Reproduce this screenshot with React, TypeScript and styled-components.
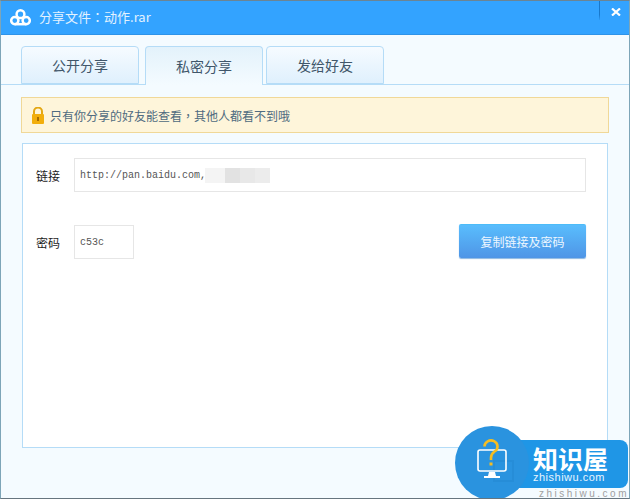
import React from "react";
import styled, { createGlobalStyle } from "styled-components";

const GlobalStyle = createGlobalStyle`
  html, body {
    margin: 0;
    padding: 0;
    background: #f4fbff;
  }
  * {
    box-sizing: border-box;
  }
`;

const cjk = `"Noto Sans CJK SC", "Liberation Sans", sans-serif`;

const Window = styled.div`
  position: relative;
  width: 630px;
  height: 499px;
  overflow: hidden;
  display: flex;
  flex-direction: column;
  background: #f4fbff;
  border-top: 1px solid #6b8494;
  border-left: 1px solid #7da5b8;
  border-right: 1px solid #7da5b8;
  border-bottom: 1px solid #66757f;
  font-family: ${cjk};
`;

const TitleBar = styled.div`
  height: 34px;
  flex: none;
  display: flex;
  align-items: center;
  padding-left: 9px;
  gap: 8px;
  background: #33a3ff;
  border-bottom: 1px solid #2e93e8;
  color: #e3f2ff;
  font-size: 13px;
`;

const TitleText = styled.span`
  line-height: 34px;
  margin-top: -1px;
`;

// centred full-width punctuation, as in the original's font
const Punct = styled.span`
  font-family: "Noto Sans CJK TC", sans-serif;
`;

const CloseArea = styled.div`
  margin-left: auto;
  width: 30px;
  height: 19px;
  align-self: flex-start;
  display: flex;
  align-items: center;
  justify-content: center;
  padding: 3px 0 0 3px;
  border-left: 1px solid #1878cc;
  border-image: linear-gradient(#1878cc 70%, transparent) 1;
`;

const TabBar = styled.div`
  flex: none;
  height: 50px;
  padding: 11px 0 0 20px;
  display: flex;
  align-items: flex-end;
  border-bottom: 1px solid #b5dcf7;
`;

const Tab = styled.div<{ $active?: boolean; $gap?: number }>`
  width: 118px;
  height: ${(p) => (p.$active ? 39 : 38)}px;
  margin-left: ${(p) => p.$gap ?? 0}px;
  margin-bottom: ${(p) => (p.$active ? -1 : 0)}px;
  display: flex;
  align-items: center;
  justify-content: center;
  border: 1px solid #b5dcf7;
  border-bottom: ${(p) => (p.$active ? "none" : "1px solid #b5dcf7")};
  border-radius: 4px 4px 0 0;
  background: ${(p) =>
    p.$active
      ? "linear-gradient(#e3f2fb, #f4fbff)"
      : "linear-gradient(#f6fbff, #dff0fd)"};
  color: #40566a;
  font-size: 14px;
`;

const Notice = styled.div`
  flex: none;
  width: 588px;
  height: 36px;
  margin: 12px 0 0 20px;
  display: flex;
  align-items: center;
  padding-left: 9px;
  gap: 5px;
  background: #fef5da;
  border: 1px solid #f0d898;
  color: #4f6b80;
  font-size: 12px;
`;

const Panel = styled.div`
  flex: none;
  width: 586px;
  height: 305px;
  margin: 10px 0 0 21px;
  padding: 14px 21px 0 13px;
  display: flex;
  flex-direction: column;
  background: #fff;
  border: 1px solid #b5dcf7;
`;

const Row = styled.div<{ $top?: number }>`
  display: flex;
  align-items: center;
  height: 34px;
  margin-top: ${(p) => p.$top ?? 0}px;
`;

const Label = styled.span`
  width: 38px;
  flex: none;
  color: #1c1c1c;
  font-size: 12px;
`;

const Field = styled.div<{ $width?: number }>`
  height: 34px;
  width: ${(p) => (p.$width ? `${p.$width}px` : "auto")};
  flex: ${(p) => (p.$width ? "none" : "1")};
  display: flex;
  align-items: center;
  padding-left: 5px;
  border: 1px solid #e6e6e6;
  color: #555;
  font-family: "Liberation Mono", monospace;
  font-size: 10px;
`;

const BlurRow = styled.span`
  display: flex;
  margin-left: -1px;
  margin-top: 1px;
`;

const Blurred = styled.span<{ $w: number; $shade: string }>`
  width: ${(p) => p.$w}px;
  height: 15px;
  flex: none;
  background: ${(p) => p.$shade};
`;

const CopyButton = styled.button`
  margin: -1px 0 0 auto;
  align-self: flex-start;
  width: 127px;
  height: 34px;
  padding: 0;
  border: none;
  border-top: 1px solid #4dbcf8;
  border-radius: 2px;
  background: linear-gradient(#59bdfd, #4f95e6);
  box-shadow: 0 1px 1px #8bb6e2;
  color: #eef7ff;
  font-family: ${cjk};
  font-size: 12px;
`;

const Badge = styled.div`
  position: absolute;
  left: 454px;
  top: 425px;
  width: 176px;
  height: 74px;
`;

const BadgeBar = styled.div`
  position: absolute;
  left: 37px;
  top: 14px;
  width: 136px;
  height: 48px;
  padding: 5px 0 0 41px;
  border-radius: 0 8px 8px 0;
  background: #1f96e6;
  color: #fff;
`;

const BadgeCircle = styled.div`
  position: absolute;
  left: 0;
  top: 0;
  width: 74px;
  height: 74px;
  padding-bottom: 9px;
  border-radius: 50%;
  background: #2a93df;
  display: flex;
  align-items: center;
  justify-content: center;
`;

const BadgeTitle = styled.div`
  font-size: 25px;
  font-weight: 700;
  line-height: 27px;
  white-space: nowrap;
`;

const BadgeUrl = styled.div`
  font-family: "Liberation Sans", sans-serif;
  font-size: 11px;
  line-height: 11px;
  letter-spacing: 0.5px;
  color: #e6f4ff;
`;

const Watermark = styled.div`
  position: absolute;
  right: 0;
  bottom: -1px;
  font-family: "Liberation Sans", sans-serif;
  font-size: 10px;
  line-height: 11px;
  letter-spacing: 2.5px;
  color: #a0a0a0;
`;

const CloudLogo = () => (
  <svg width="21" height="17" viewBox="0 0 21 17" fill="none" stroke="#fff" strokeWidth="2.5">
    <circle cx="10.5" cy="5.2" r="3.9" />
    <circle cx="4.8" cy="11.6" r="3.6" />
    <circle cx="16.2" cy="11.6" r="3.6" />
    <path d="M4.8 15.2 H16.2" />
  </svg>
);

const CloseIcon = () => (
  <svg width="10" height="8" viewBox="0 0 10 8" stroke="#fff" strokeWidth="2.2">
    <path d="M1 0.5 L9 7.5 M9 0.5 L1 7.5" />
  </svg>
);

const LockIcon = () => (
  <svg width="14" height="17" viewBox="0 0 14 17">
    <path d="M3 8 V4.5 a4 4 0 0 1 8 0 V8" fill="none" stroke="#e3a713" strokeWidth="2" />
    <rect x="1" y="7" width="12" height="10" rx="1" fill="#f2ae0c" />
    <rect x="6" y="10" width="2" height="4" fill="#a56c00" />
  </svg>
);

const MonitorIcon = () => (
  <svg width="30" height="39" viewBox="0 0 30 39" fill="none" style={{ overflow: "visible" }}>
    <path d="M17 22 H36 V42 H17 Z" stroke="#1c7cc4" strokeOpacity="0.25" strokeWidth="2" />
    <rect x="1" y="11" width="28" height="21" rx="2" stroke="#fff" strokeWidth="1.6" />
    <path d="M12 33 H18 L19 37 H23 V39 H7 V37 H11 Z" fill="#fff" />
    <path d="M7.5 7.5 a6.5 6 0 1 1 10 5 c-2.5 1.8 -3.5 3 -3.5 6.5 V21" stroke="#f5bd22" strokeWidth="2.6" />
    <rect x="12.5" y="23.5" width="3" height="3" fill="#f5bd22" />
  </svg>
);

const blurBlocks = [
  { w: 20, shade: "#f4f4f4" },
  { w: 15, shade: "#e2e2e2" },
  { w: 15, shade: "#e8e8e8" },
  { w: 15, shade: "#ececec" },
];

const App = () => (
  <>
    <GlobalStyle />
    <Window>
      <TitleBar>
        <CloudLogo />
        <TitleText>
          分享文件<Punct>：</Punct>动作.rar
        </TitleText>
        <CloseArea>
          <CloseIcon />
        </CloseArea>
      </TitleBar>
      <TabBar>
        <Tab>公开分享</Tab>
        <Tab $active $gap={6}>私密分享</Tab>
        <Tab $gap={3}>发给好友</Tab>
      </TabBar>
      <Notice>
        <LockIcon />
        <span>
          只有你分享的好友能查看<Punct>，</Punct>其他人都看不到哦
        </span>
      </Notice>
      <Panel>
        <Row>
          <Label>链接</Label>
          <Field>
            http://pan.baidu.com,
            <BlurRow>
              {blurBlocks.map((b, i) => (
                <Blurred key={i} $w={b.w} $shade={b.shade} />
              ))}
            </BlurRow>
          </Field>
        </Row>
        <Row $top={33}>
          <Label>密码</Label>
          <Field $width={60}>c53c</Field>
          <CopyButton>复制链接及密码</CopyButton>
        </Row>
      </Panel>
      <Badge>
        <BadgeBar>
          <BadgeTitle>知识屋</BadgeTitle>
          <BadgeUrl>zhishiwu.com</BadgeUrl>
        </BadgeBar>
        <BadgeCircle>
          <MonitorIcon />
        </BadgeCircle>
      </Badge>
      <Watermark>zhishiwu.com</Watermark>
    </Window>
  </>
);

export default App;
